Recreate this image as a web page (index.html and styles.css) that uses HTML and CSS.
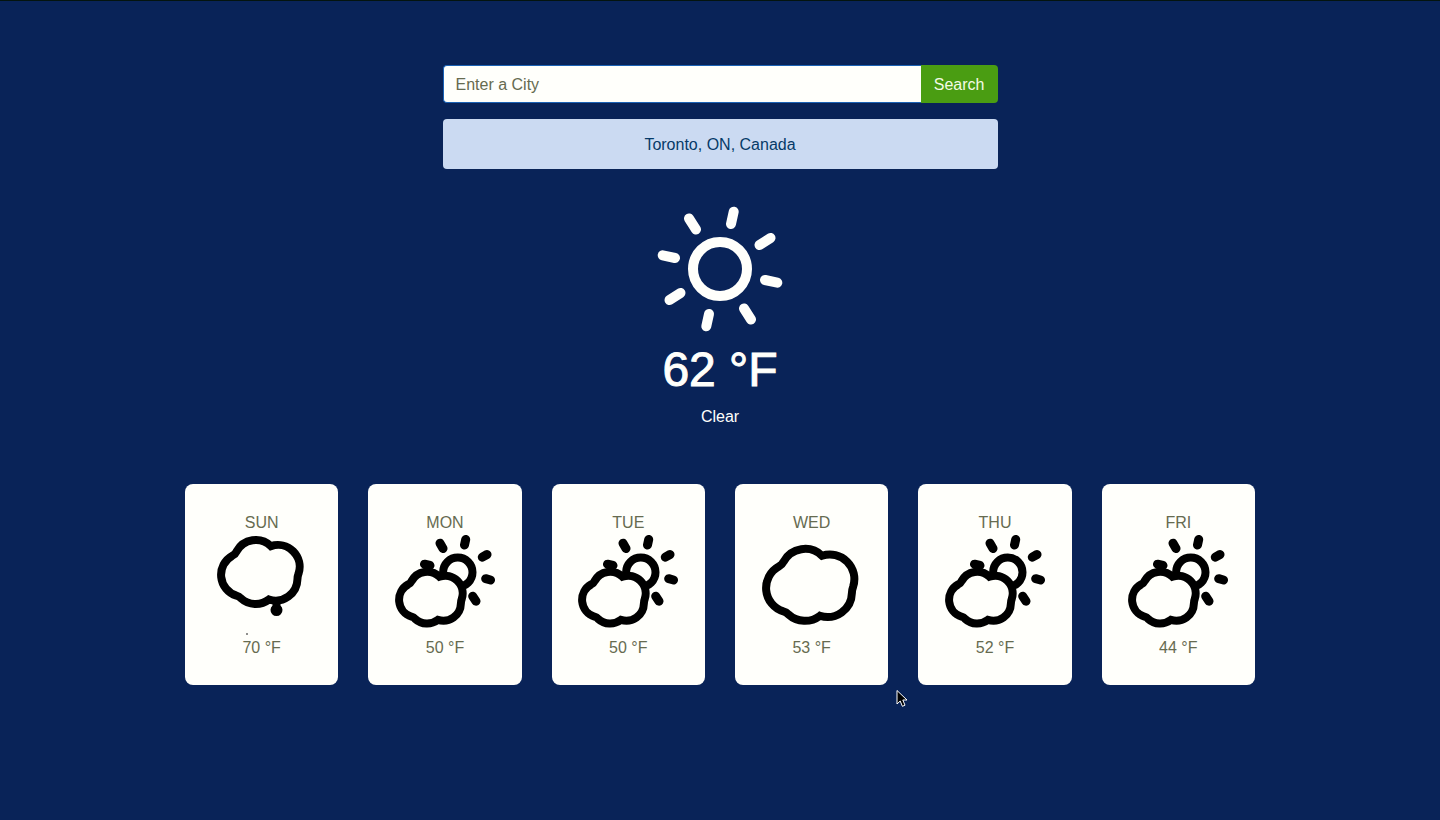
FILE: index.html
```html
<!DOCTYPE html>
<html lang="en">
<head>
<meta charset="utf-8">
<title>Weather</title>
<meta name="viewport" content="width=device-width, initial-scale=1">
<link rel="stylesheet" href="styles.css">
</head>
<body>
<svg class="symbols" aria-hidden="true">
  <defs>
    <path id="cloud" vector-effect="non-scaling-stroke" d="M22 26.8A24.5 24.5 0 0 1 60.6 20.8A24.5 24.5 0 0 1 91.6 51.8Q90.4 55 90.4 58A24.5 24.5 0 0 1 58.4 80.8A24.5 24.5 0 0 1 27 79.5Q24.8 77.1 21.9 76.4A24.5 24.5 0 0 1 17.3 31.5Q20.4 30.1 22 26.8Z"/>
    <symbol id="cloudy" viewBox="0 0 100 100"><use href="#cloud" transform="translate(-.5 0)"/></symbol>
    <symbol id="drizzle" viewBox="0 0 100 100">
      <use href="#cloud" transform="translate(5 -7.4) scale(.89)"/>
      <path class="solid" d="M60.5 67H68.5V70.5A6 6 0 1 1 60.5 70.5Z"/>
      <circle class="solid" cx="35" cy="99" r=".8"/>
    </symbol>
    <symbol id="partly" viewBox="0 0 100 100">
      <circle cx="62.8" cy="37.2" r="14.7"/>
      <path class="ray" d="M70.7 4.5L69.5 10M45 8.2L48 13.5M92 19.5L87.3 22.2M90.7 43.7L95.5 45M77.7 61.2L81 66.2M29.5 29.2L35 30.5"/>
      <use href="#cloud" transform="translate(.8 26.7) scale(.72)"/>
    </symbol>
  </defs>
</svg>
<main class="page">
  <section class="lookup">
    <form class="search">
      <input class="search-input" type="text" placeholder="Enter a City" aria-label="Enter a City">
      <button class="search-button" type="button">Search</button>
    </form>
    <div class="location">Toronto, ON, Canada</div>
  </section>
  <section class="current">
    <svg class="sun" viewBox="-70 -70 140 140" aria-hidden="true">
      <circle r="27"/>
      <g id="rays"><path d="M13.7 -57.3L11 -45M50.5 -31L39.5 -24"/></g>
      <use href="#rays" transform="rotate(90)"/>
      <use href="#rays" transform="rotate(180)"/>
      <use href="#rays" transform="rotate(270)"/>
    </svg>
    <h1 class="temperature">62 °F</h1>
    <p class="condition">Clear</p>
  </section>
  <section class="forecast">
    <article class="card"><p>SUN</p><svg class="icon" aria-hidden="true"><use href="#drizzle"/></svg><p>70 °F</p></article>
    <article class="card"><p>MON</p><svg class="icon" aria-hidden="true"><use href="#partly"/></svg><p>50 °F</p></article>
    <article class="card"><p>TUE</p><svg class="icon" aria-hidden="true"><use href="#partly"/></svg><p>50 °F</p></article>
    <article class="card"><p>WED</p><svg class="icon" aria-hidden="true"><use href="#cloudy"/></svg><p>53 °F</p></article>
    <article class="card"><p>THU</p><svg class="icon" aria-hidden="true"><use href="#partly"/></svg><p>52 °F</p></article>
    <article class="card"><p>FRI</p><svg class="icon" aria-hidden="true"><use href="#partly"/></svg><p>44 °F</p></article>
  </section>
</main>
<svg class="pointer" viewBox="0 0 12 19" aria-hidden="true"><path d="M1 1.5V15L4.2 12L6.4 17.3L9 16.2L6.8 11H11Z"/></svg>
</body>
</html>
```
FILE: styles.css
```css
* {
  box-sizing: border-box;
}

body {
  margin: 0;
  min-height: 100vh;
  border-top: 1px solid #04140f;
  background: #092358;
  color: #fffffb;
  font: 16px/24px "Helvetica Neue", "Liberation Sans", Arial, sans-serif;
}

p,
h1 {
  margin: 0;
}

.symbols {
  display: block;
  width: 0;
  height: 0;
}

.page {
  max-width: 1100px;
  margin: 0 auto;
  padding: 64px 15px;
}

.lookup {
  max-width: 555px;
  margin: 0 auto;
}

.search {
  display: flex;
}

.search-input {
  flex: 1;
  min-width: 0;
  height: 38px;
  padding: 7px 12px 5px;
  border: 1px solid #1b62b5;
  border-right: 0;
  border-radius: 4px 0 0 4px;
  background: #fffffb;
  color: #495057;
  font: inherit;
}

.search-input::placeholder {
  color: #666b50;
  opacity: 1;
}

.search-button {
  height: 38px;
  padding: 2px 13px 0;
  border: 0;
  border-radius: 0 4px 4px 0;
  background: #4a9d12;
  color: #f4fbe6;
  font: inherit;
}

.location {
  margin-top: 16px;
  padding: 14px 20px 12px;
  border-radius: 4px;
  background: #cbdaf2;
  color: #063a68;
  text-align: center;
}

.current {
  display: flex;
  flex-direction: column;
  align-items: center;
  margin-top: 30px;
}

.sun {
  width: 140px;
  height: 140px;
  fill: none;
  stroke: #fffffb;
  stroke-width: 10px;
  stroke-linecap: round;
}

.temperature {
  margin-top: 2px;
  font-size: 48px;
  font-weight: 500;
  line-height: 58px;
  -webkit-text-stroke: 1px #fffffb;
}

.condition {
  margin-top: 6px;
}

.forecast {
  display: grid;
  grid-template-columns: repeat(6, 1fr);
  gap: 30px;
  margin-top: 55px;
}

.card {
  display: flex;
  flex-direction: column;
  align-items: center;
  padding: 27px 16px 25px;
  border-radius: 8px;
  background: #fffffb;
  color: #666b50;
}

.icon {
  width: 100px;
  height: 100px;
  margin-bottom: 1px;
  fill: #fffffb;
  stroke: #000;
  stroke-width: 8px;
  stroke-linecap: round;
}

.ray {
  stroke-width: 9px;
}

.solid {
  fill: #000;
  stroke: none;
}

.pointer {
  position: absolute;
  top: 689px;
  left: 896px;
  width: 12px;
  height: 19px;
  fill: #000;
  stroke: #fff;
  stroke-width: 1px;
}
```
